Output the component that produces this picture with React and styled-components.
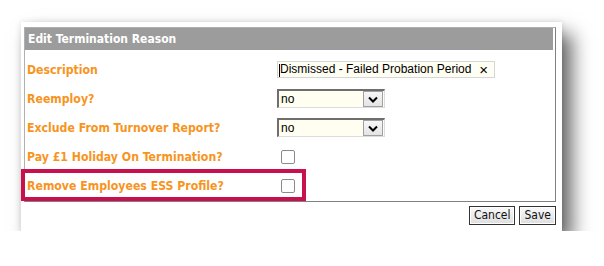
import React from "react";
import styled, { createGlobalStyle } from "styled-components";

const GlobalStyle = createGlobalStyle`
  body {
    margin: 0;
    background: #ffffff;
    font-family: "DejaVu Sans Condensed", "DejaVu Sans", sans-serif;
  }
`;

const Page = styled.div`
  padding: 22px 0 0 21px;
`;

const Card = styled.div`
  position: relative;
  box-sizing: border-box;
  width: 541px;
  height: 209px;
  padding: 5px 6px 0 3px;
  background: #ffffff;
  box-shadow: 10px 12px 18px rgba(0, 0, 0, 0.6), 0 0 6px rgba(0, 0, 0, 0.12);
`;

const Panel = styled.div`
  box-sizing: border-box;
  height: 175px;
  border: 1px solid #b0b0b0;
  border-right-color: #808080;
  border-bottom-color: #808080;
`;

const Header = styled.div`
  height: 22px;
  margin-right: 2px;
  padding-left: 3px;
  background: #9c9c9c;
  color: #ffffff;
  font-weight: bold;
  font-size: 12px;
  line-height: 22px;
`;

const Form = styled.div`
  display: grid;
  grid-template-columns: 250px 1fr;
  grid-auto-rows: 29px;
  padding: 5px 0 0 2px;
`;

const Label = styled.div`
  display: flex;
  align-items: center;
  color: #f7941e;
  font-weight: bold;
  font-size: 12.2px;
`;

const Field = styled.div`
  display: flex;
  align-items: center;
  padding-left: ${(p) => p.$indent || 0}px;
`;

const TextBox = styled.div`
  box-sizing: border-box;
  display: flex;
  align-items: center;
  justify-content: space-between;
  width: 218px;
  height: 17px;
  padding: 0 6px 0 1px;
  border: 1px solid #d6d6d6;
  background: #fffef2;
  font-family: "Liberation Sans", Arial, sans-serif;
  font-size: 12px;
  color: #000;
`;

const Caret = styled.span`
  display: inline-block;
  width: 1px;
  height: 13px;
  background: #000;
  vertical-align: middle;
`;

const Clear = styled.span`
  font-size: 15px;
  line-height: 15px;
`;

const Select = styled.div`
  box-sizing: border-box;
  display: flex;
  align-items: center;
  justify-content: space-between;
  width: 108px;
  height: 19px;
  border-top: 2px solid #6e6e6e;
  border-left: 2px solid #6e6e6e;
  border-right: 1px solid #dcdcdc;
  border-bottom: 1px solid #dcdcdc;
  background: #fffef0;
  font-family: "Liberation Sans", Arial, sans-serif;
  font-size: 12px;
  padding-left: 2px;
`;

const Arrow = styled.div`
  box-sizing: border-box;
  display: flex;
  align-items: center;
  justify-content: center;
  width: 20px;
  height: 16px;
  margin-right: 1px;
  border: 1px solid #a0a0a0;
  background: linear-gradient(#f7f7f7, #e4e4e4);
`;

const Check = styled.div`
  box-sizing: border-box;
  width: 14px;
  height: 14px;
  border: 1px solid #8a8a8a;
  border-radius: 2px;
  background: #fff;
`;

const Actions = styled.div`
  display: flex;
  justify-content: flex-end;
  gap: 4px;
  margin-top: 4px;
`;

const Button = styled.button`
  box-sizing: border-box;
  height: 19px;
  padding: 0 4px;
  border: 1px solid #333;
  box-shadow: inset 0 0 0 1px #fff;
  background: linear-gradient(#fafafa, #dedede);
  font-family: "DejaVu Sans Condensed", "DejaVu Sans", sans-serif;
  font-size: 12px;
  color: #111;
  line-height: 15px;
`;

const Highlight = styled.div`
  position: absolute;
  left: 0;
  top: 147px;
  box-sizing: border-box;
  width: 285px;
  height: 32px;
  border: 4px solid #c8104f;
  pointer-events: none;
`;

const Chevron = () => (
  <svg width="10" height="7" viewBox="0 0 10 7">
    <path d="M1 1.5 L5 5.5 L9 1.5" fill="none" stroke="#000" strokeWidth="2" />
  </svg>
);

const DropDown = ({ value }) => (
  <Select>
    <span>{value}</span>
    <Arrow>
      <Chevron />
    </Arrow>
  </Select>
);

const App = () => {
  return (
    <Page>
      <GlobalStyle />
      <Card>
        <Panel>
          <Header>Edit Termination Reason</Header>
          <Form>
            <Label>Description</Label>
            <Field>
              <TextBox>
                <span>
                  <Caret />
                  Dismissed - Failed Probation Period
                </span>
                <Clear>×</Clear>
              </TextBox>
            </Field>

            <Label>Reemploy?</Label>
            <Field>
              <DropDown value="no" />
            </Field>

            <Label>Exclude From Turnover Report?</Label>
            <Field>
              <DropDown value="no" />
            </Field>

            <Label>Pay £1 Holiday On Termination?</Label>
            <Field $indent={4}>
              <Check />
            </Field>

            <Label>Remove Employees ESS Profile?</Label>
            <Field $indent={4}>
              <Check />
            </Field>
          </Form>
        </Panel>
        <Actions>
          <Button>Cancel</Button>
          <Button>Save</Button>
        </Actions>
        <Highlight />
      </Card>
    </Page>
  );
};

export default App;
